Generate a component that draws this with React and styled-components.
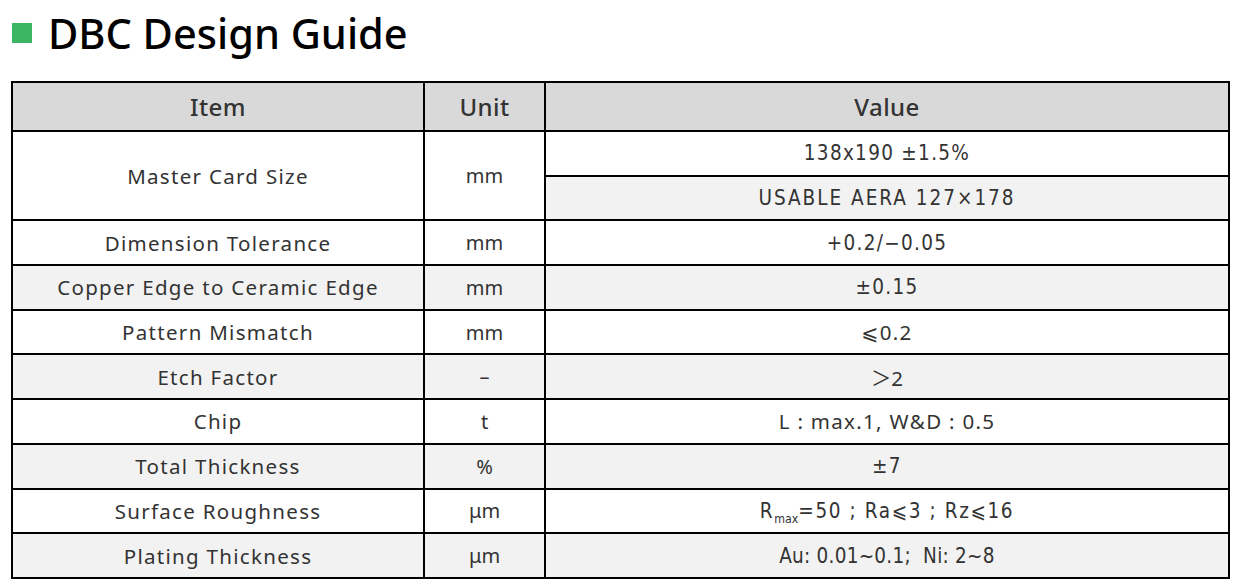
import React from "react";
import styled, { createGlobalStyle } from "styled-components";

const Global = createGlobalStyle`
  html, body { margin: 0; padding: 0; background: #ffffff; }
  body { font-family: "Noto Sans", "DejaVu Sans", "Noto Sans CJK SC", sans-serif; color: #333; }
`;

const BODY = `"Noto Sans", "DejaVu Sans", "Noto Sans CJK SC", sans-serif`;
const NARROW = `"DejaVu Sans Condensed", "DejaVu Sans", "Noto Sans CJK SC", sans-serif`;

const Page = styled.div`
  width: 1236px;
  height: 588px;
  box-sizing: border-box;
  padding: 10px 0 0 11px;
`;

const Title = styled.h1`
  display: flex;
  align-items: center;
  gap: 16px;
  margin: 0 0 25px 1px;
  height: 46px;
  font-family: ${BODY};
  font-weight: 500;
  font-size: 41.5px;
  line-height: 46px;
  color: #000;
`;

const Square = styled.span`
  width: 20px;
  height: 20px;
  background: #3cb563;
  flex: none;
`;

const Grid = styled.div`
  display: grid;
  width: 1219px;
  box-sizing: border-box;
  grid-template-columns: 410px 119px 682px;
  grid-template-rows: 47px repeat(10, 42.7px);
  gap: 2px;
  padding: 2px;
  background: #000;
`;

const Cell = styled.div`
  display: flex;
  align-items: center;
  justify-content: center;
  background: ${(p) => (p.$alt ? "#f2f2f2" : "#ffffff")};
  font-family: ${BODY};
  font-size: 20px;
  color: #333;
  white-space: nowrap;
  grid-row: ${(p) => (p.$span ? `span ${p.$span}` : "auto")};
`;

const HeadCell = styled(Cell)`
  background: #d9d9d9;
  font-size: 24px;
  font-weight: 500;
  letter-spacing: 0.4px;
`;

const ItemCell = styled(Cell)`
  font-size: 20.5px;
  letter-spacing: 1.3px;
`;

const Value = styled(Cell)`
  font-family: ${(p) => (p.$narrow ? NARROW : BODY)};
  font-size: 20.5px;
  letter-spacing: ${(p) => (p.$ls != null ? p.$ls : 1.3)}px;
`;

const Text = styled.span`
  display: inline-block;
  white-space: pre;
`;

const Sub = styled.sub`
  font-size: 0.6em;
  letter-spacing: 0;
  vertical-align: -5px;
  line-height: 0;
`;

const rows = [
  { item: "Dimension Tolerance", unit: "mm", value: "+0.2/\u22120.05", narrow: true, alt: false },
  { item: "Copper Edge to Ceramic Edge", unit: "mm", value: "\u00b10.15", narrow: true, alt: true },
  { item: "Pattern Mismatch", unit: "mm", value: "\u2a7d0.2", narrow: false, alt: false },
  { item: "Etch Factor", unit: "\u2013", value: "\uff1e2", narrow: false, alt: true, ls: 0 },
  { item: "Chip", unit: "t", value: "L : max.1, W&D : 0.5", narrow: false, alt: false },
  { item: "Total Thickness", unit: "%", value: "\u00b17", narrow: true, alt: true },
  {
    item: "Surface Roughness",
    unit: "\u03bcm",
    value: (
      <>
        R<Sub>max</Sub>=50 ; Ra{"\u2a7d"}3 ; Rz{"\u2a7d"}16
      </>
    ),
    narrow: true,
    alt: false,
    ls: 1.6,
  },
  { item: "Plating Thickness", unit: "\u03bcm", value: "Au: 0.01~0.1;  Ni: 2~8", narrow: true, alt: true, ls: 0.25 },
];

export default function App() {
  return (
    <Page>
      <Global />
      <Title>
        <Square />
        DBC Design Guide
      </Title>
      <Grid>
        <HeadCell>Item</HeadCell>
        <HeadCell>Unit</HeadCell>
        <HeadCell>Value</HeadCell>

        <ItemCell $span={2}>Master Card Size</ItemCell>
        <Cell $span={2}>mm</Cell>
        <Value $narrow>
          <Text>138x190 ±1.5%</Text>
        </Value>
        <Value $narrow $alt $ls={2}>
          <Text>USABLE AERA 127×178</Text>
        </Value>

        {rows.map((r, i) => (
          <React.Fragment key={i}>
            <ItemCell $alt={r.alt}>{r.item}</ItemCell>
            <Cell $alt={r.alt}>{r.unit}</Cell>
            <Value $alt={r.alt} $narrow={r.narrow} $ls={r.ls}>
              <Text>{r.value}</Text>
            </Value>
          </React.Fragment>
        ))}
      </Grid>
    </Page>
  );
}
